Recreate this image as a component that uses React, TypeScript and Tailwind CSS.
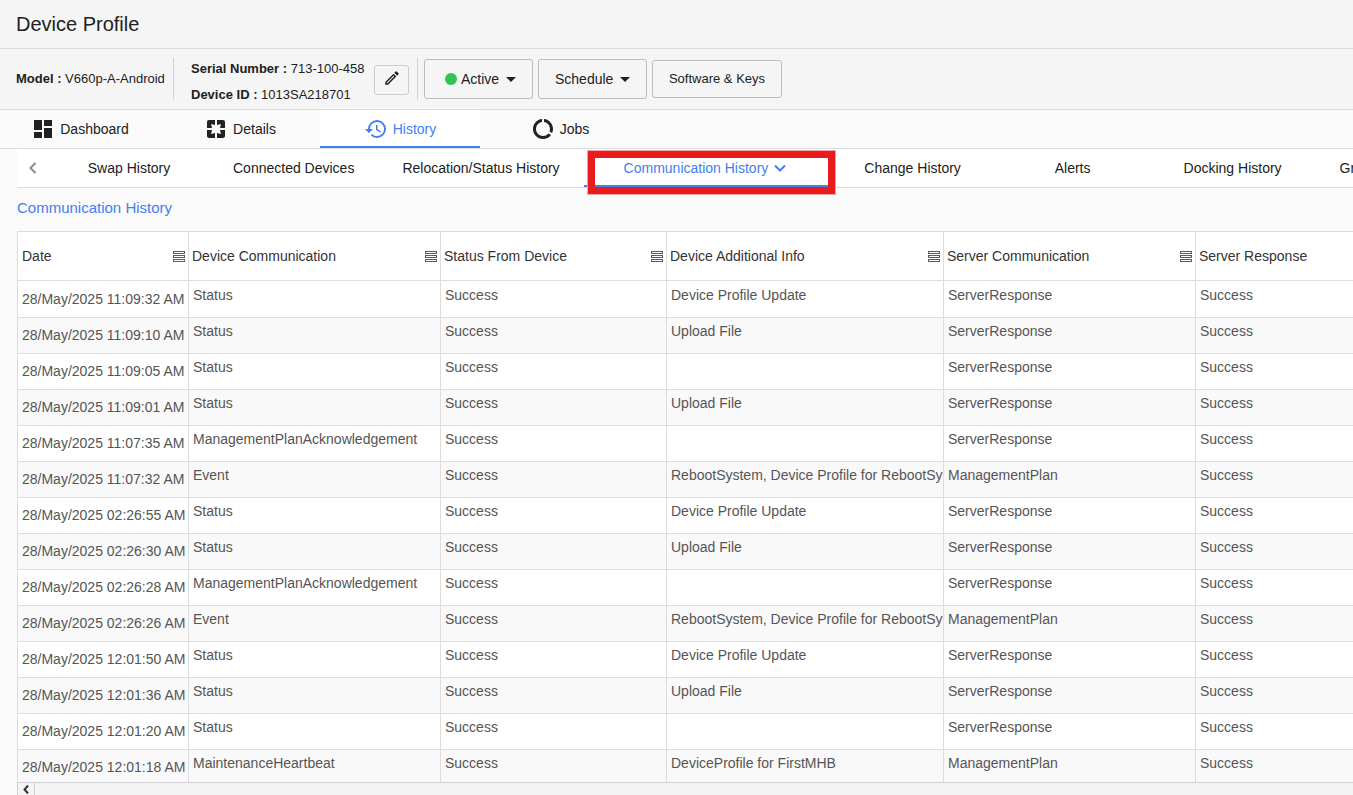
import React from 'react';
import {
  MdArrowDropDown,
  MdDashboard,
  MdDataUsage,
  MdHistory,
  MdOutlineModeEdit,
  MdPages,
} from 'react-icons/md';

const mainTabs = [
  { id: 'dashboard', label: 'Dashboard', Icon: MdDashboard },
  { id: 'details', label: 'Details', Icon: MdPages },
  { id: 'history', label: 'History', Icon: MdHistory, active: true },
  { id: 'jobs', label: 'Jobs', Icon: MdDataUsage },
];

const historyTabs = [
  { id: 'swap', label: 'Swap History' },
  { id: 'connected', label: 'Connected Devices' },
  { id: 'relocation', label: 'Relocation/Status History' },
  { id: 'communication', label: 'Communication History', active: true },
  { id: 'change', label: 'Change History' },
  { id: 'alerts', label: 'Alerts' },
  { id: 'docking', label: 'Docking History' },
  { id: 'group', label: 'Group History', className: 'pl-[27px] justify-start' },
];

const columns = [
  { title: 'Date', className: 'w-[171px] pl-1' },
  { title: 'Device Communication', className: 'w-[252px] pl-[3px]' },
  { title: 'Status From Device', className: 'w-[226px] pl-[3px]' },
  { title: 'Device Additional Info', className: 'w-[277px] pl-[3px]' },
  { title: 'Server Communication', className: 'w-[252px] pl-[3px]' },
  { title: 'Server Response', className: 'w-[252px] pl-[3px]' },
];

const REBOOT = 'RebootSystem, Device Profile for RebootSystem';

const rows = [
  ['28/May/2025 11:09:32 AM', 'Status', 'Success', 'Device Profile Update', 'ServerResponse', 'Success'],
  ['28/May/2025 11:09:10 AM', 'Status', 'Success', 'Upload File', 'ServerResponse', 'Success'],
  ['28/May/2025 11:09:05 AM', 'Status', 'Success', '', 'ServerResponse', 'Success'],
  ['28/May/2025 11:09:01 AM', 'Status', 'Success', 'Upload File', 'ServerResponse', 'Success'],
  ['28/May/2025 11:07:35 AM', 'ManagementPlanAcknowledgement', 'Success', '', 'ServerResponse', 'Success'],
  ['28/May/2025 11:07:32 AM', 'Event', 'Success', REBOOT, 'ManagementPlan', 'Success'],
  ['28/May/2025 02:26:55 AM', 'Status', 'Success', 'Device Profile Update', 'ServerResponse', 'Success'],
  ['28/May/2025 02:26:30 AM', 'Status', 'Success', 'Upload File', 'ServerResponse', 'Success'],
  ['28/May/2025 02:26:28 AM', 'ManagementPlanAcknowledgement', 'Success', '', 'ServerResponse', 'Success'],
  ['28/May/2025 02:26:26 AM', 'Event', 'Success', REBOOT, 'ManagementPlan', 'Success'],
  ['28/May/2025 12:01:50 AM', 'Status', 'Success', 'Device Profile Update', 'ServerResponse', 'Success'],
  ['28/May/2025 12:01:36 AM', 'Status', 'Success', 'Upload File', 'ServerResponse', 'Success'],
  ['28/May/2025 12:01:20 AM', 'Status', 'Success', '', 'ServerResponse', 'Success'],
  ['28/May/2025 12:01:18 AM', 'MaintenanceHeartbeat', 'Success', 'DeviceProfile for FirstMHB', 'ManagementPlan', 'Success'],
];

const ColumnMenuIcon = () => (
  <svg width="12" height="12" viewBox="0 0 12 12" fill="none" stroke="#5c5c5c" shapeRendering="crispEdges">
    <rect x="0.5" y="1.5" width="11" height="2" />
    <rect x="0.5" y="5.5" width="11" height="2" />
    <rect x="0.5" y="9.5" width="11" height="2" />
  </svg>
);

const DeviceBar = () => (
  <div className="flex h-[61px] shrink-0 items-center border-b border-[#dcdcdc] bg-[#f5f5f5] pl-4 text-[13px]">
    <div className="flex h-[42px] w-[158px] items-center border-r border-[#d2d2d2] whitespace-nowrap">
      <p>
        <b>Model :</b> V660p-A-Android
      </p>
    </div>
    <div className="w-[200px] pt-1.5 pl-[17px] leading-[26px] whitespace-nowrap">
      <p>
        <b>Serial Number :</b> 713-100-458
      </p>
      <p>
        <b>Device ID :</b> 1013SA218701
      </p>
    </div>
    <div className="flex h-[42px] w-11 items-center border-r border-[#d2d2d2] pt-0.5">
      <button
        type="button"
        aria-label="Edit"
        className="flex h-[30px] w-[35px] items-center justify-center rounded-[3px] border border-[#ccc] pb-1"
      >
        <MdOutlineModeEdit size={18} />
      </button>
    </div>
    <div className="flex items-center gap-[5px] pl-1.5">
      <button
        type="button"
        className="flex h-10 w-[109px] items-center rounded-[3px] border border-[#bdbdbd] pl-5 text-sm"
      >
        <span className="mr-1 size-3 rounded-full bg-[#2fc653]" />
        Active
        <MdArrowDropDown size={24} />
      </button>
      <button
        type="button"
        className="flex h-10 w-[109px] items-center rounded-[3px] border border-[#bdbdbd] pl-4 text-sm"
      >
        Schedule
        <MdArrowDropDown size={24} />
      </button>
      <button type="button" className="h-[38px] w-[130px] rounded-[3px] border border-[#bdbdbd]">
        Software &amp; Keys
      </button>
    </div>
  </div>
);

const MainTabs = () => (
  <nav className="flex h-[39px] shrink-0 border-b border-[#dcdcdc] text-sm">
    {mainTabs.map(({ id, label, Icon, active }) => (
      <a
        key={id}
        href={`#${id}`}
        className={`flex w-40 items-center justify-center gap-[5px] border-b-2 pt-0.5 ${
          active ? 'border-[#4280f0] bg-white text-[#4280f0]' : 'border-transparent'
        }`}
      >
        <Icon size={24} />
        {label}
      </a>
    ))}
  </nav>
);

const HistoryTabs = () => (
  <nav className="ml-[17px] flex h-[39px] shrink-0 overflow-x-clip border-b border-[#dcdcdc] bg-white text-sm whitespace-nowrap">
    <button type="button" aria-label="Previous tabs" className="flex w-8 shrink-0 items-center pl-3 text-[#8c8c8c]">
      <svg width="8" height="12" viewBox="0 0 8 12" fill="none" stroke="currentColor" strokeWidth="2">
        <path d="M6.5 1L1.5 6L6.5 11" />
      </svg>
    </button>
    {historyTabs.map(({ id, label, active, className }) =>
      active ? (
        <a
          key={id}
          href={`#${id}`}
          className="relative flex w-[249px] shrink-0 items-center gap-1.5 border-b-2 border-[#4280f0] pt-0.5 pl-10 text-[#4280f0]"
        >
          {label}
          <svg width="12" height="8" viewBox="0 0 12 8" fill="none" stroke="currentColor" strokeWidth="2">
            <path d="M1 1.5L6 6.5L11 1.5" />
          </svg>
          <span className="absolute top-0.5 left-1 h-[43px] w-[247px] border-[7px] border-[#e81c1c] ring-1 ring-[#f3a5a5]" />
        </a>
      ) : (
        <a
          key={id}
          href={`#${id}`}
          className={`flex min-w-40 shrink-0 items-center border-b-2 border-transparent pt-0.5 ${
            className ?? 'justify-center px-6'
          }`}
        >
          {label}
        </a>
      ),
    )}
  </nav>
);

const CommunicationTable = () => (
  <div className="min-h-0 flex-1 overflow-hidden border-t border-l border-[#ddd] bg-white">
    <table className="w-[1430px] table-fixed border-separate border-spacing-0 text-sm">
      <thead>
        <tr className="h-[49px]">
          {columns.map(({ title, className }) => (
            <th key={title} className={`border-r border-b border-[#ddd] pr-[3px] text-left font-normal text-[#333] ${className}`}>
              <div className="flex items-center justify-between">
                {title}
                <button type="button" aria-label={`${title} menu`}>
                  <ColumnMenuIcon />
                </button>
              </div>
            </th>
          ))}
        </tr>
      </thead>
      <tbody className="text-[#555]">
        {rows.map((row) => (
          <tr key={row[0]} className="h-9 first:h-[37px] even:bg-[#f9f9f9]">
            {row.map((cell, i) => (
              <td
                key={i}
                className={`overflow-hidden border-r border-b border-[#ddd] pl-1 align-bottom whitespace-nowrap ${
                  i === 0 ? 'pb-2' : 'pb-3'
                }`}
              >
                {cell}
              </td>
            ))}
          </tr>
        ))}
      </tbody>
    </table>
  </div>
);

export default function App() {
  return (
    <div className="flex h-screen flex-col overflow-hidden bg-[#fafafa] font-['Liberation_Sans',Arial,sans-serif] text-[#212121]">
      <header className="flex h-[49px] shrink-0 items-center border-b border-[#dcdcdc] bg-[#f5f5f5] pl-4">
        <h1 className="text-xl">Device Profile</h1>
      </header>
      <DeviceBar />
      <MainTabs />
      <HistoryTabs />
      <main className="flex min-h-0 flex-1 flex-col pl-[17px]">
        <h2 className="flex h-[43px] shrink-0 items-center pb-0.5 text-[15px] text-[#4280f0]">Communication History</h2>
        <CommunicationTable />
        <div className="flex h-[13px] shrink-0 border-t border-l border-[#d0d0d4] bg-[#f4f4f4]">
          <button
            type="button"
            aria-label="Scroll left"
            className="flex w-[17px] items-center justify-center border-r border-[#d0d0d4]"
          >
            <svg width="6" height="9" viewBox="0 0 6 9" fill="none" stroke="#333" strokeWidth="2">
              <path d="M5 0.5L1.5 4.5L5 8.5" />
            </svg>
          </button>
        </div>
      </main>
    </div>
  );
}
